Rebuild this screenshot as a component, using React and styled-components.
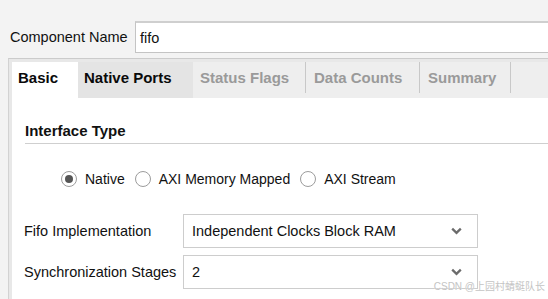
import styled, { createGlobalStyle } from 'styled-components'

const Global = createGlobalStyle`
  html, body {
    margin: 0;
    padding: 0;
    background: #f3f3f3;
    overflow: hidden;
  }
  body {
    font-family: "Liberation Sans", Arial, sans-serif;
    color: #111;
    width: 548px;
    height: 299px;
  }
`

const Page = styled.div`
  position: relative;
  width: 548px;
  height: 299px;
  padding-top: 21px;
  box-sizing: border-box;
  overflow: hidden;
`

const NameRow = styled.div`
  display: flex;
  align-items: center;
  height: 32px;
`

const NameLabel = styled.div`
  width: 135px;
  box-sizing: border-box;
  padding-left: 10px;
  font-size: 14.5px;
  flex: none;
`

const NameInput = styled.div`
  flex: none;
  width: 440px;
  height: 32px;
  box-sizing: border-box;
  background: #fff;
  border: 1px solid #c4c4c4;
  border-top: 2px solid #cfcfcf;
  padding-left: 4px;
  display: flex;
  align-items: center;
  font-size: 14.5px;
`

const Panel = styled.div`
  margin: 5px 0 0 8px;
  width: 560px;
  height: 260px;
  box-sizing: border-box;
  border-top: 1px solid #cbcbcb;
  border-left: 1px solid #d2d2d2;
  background: #e8e8e8;
  padding: 3px 0 0 3px;
  display: flex;
  flex-direction: column;
`

const TabStrip = styled.div`
  display: flex;
  height: 36px;
  background: #eeeeee;
  flex: none;
`

const Tab = styled.div`
  width: ${p => p.$w}px;
  box-sizing: border-box;
  display: flex;
  align-items: center;
  padding-bottom: 5px;
  font-size: 15px;
  font-weight: bold;
  color: ${p => (p.$disabled ? '#9a9a9a' : '#0a0a0a')};
  background: ${p => (p.$active ? '#ffffff' : p.$hover ? '#e4e4e4' : 'transparent')};
  position: relative;
  padding-left: ${p => p.$pl || 6}px;

  &::after {
    content: '';
    display: ${p => (p.$sep ? 'block' : 'none')};
    position: absolute;
    right: 0;
    top: 0;
    height: 31px;
    width: 1px;
    background: #c8c8c8;
  }
`

const Content = styled.div`
  flex: 1;
  background: #fff;
  padding: 24px 0 0 13px;
`

const SectionTitle = styled.div`
  font-size: 15px;
  line-height: 17px;
  font-weight: bold;
  padding-bottom: 4px;
  border-bottom: 1px solid #cfcfcf;
`

const RadioRow = styled.div`
  display: flex;
  align-items: center;
  height: 24px;
  margin: 23px 0 0 36px;
  gap: 10px;
`

const RadioItem = styled.label`
  display: flex;
  align-items: center;
  font-size: 14px;
  gap: 8px;
`

const Circle = styled.span`
  width: 16px;
  height: 16px;
  box-sizing: border-box;
  border-radius: 50%;
  border: 1.5px solid #9c9c9c;
  background: #fff;
  display: flex;
  align-items: center;
  justify-content: center;

  &::before {
    content: '';
    display: ${p => (p.$on ? 'block' : 'none')};
    width: 8px;
    height: 8px;
    border-radius: 50%;
    background: #555;
  }
`

const FieldRow = styled.div`
  display: flex;
  align-items: center;
  margin-top: ${p => p.$mt}px;
  height: 34px;
`

const FieldLabel = styled.div`
  width: 159px;
  flex: none;
  font-size: 14.5px;
  margin-left: -1px;
`

const Select = styled.div`
  width: 295px;
  height: 34px;
  box-sizing: border-box;
  border: 1.5px solid #cdcdcd;
  background: #fff;
  display: flex;
  align-items: center;
  justify-content: space-between;
  padding: 0 15px 0 8px;
  font-size: 14.5px;
`

const Watermark = styled.div`
  position: absolute;
  right: 3px;
  bottom: 6px;
  font-size: 10px;
  color: #c4c4c4;
  font-family: "Liberation Sans", "Noto Sans CJK SC", sans-serif;
  text-shadow: 0 0 1px #fff;
`

const Chevron = () => (
  <svg width="11" height="8" viewBox="0 0 11 8">
    <path d="M1.2 1.6 L5.5 5.8 L9.8 1.6" fill="none" stroke="#6b6b6b" strokeWidth="2.3" />
  </svg>
)

const tabs = [
  { name: 'Basic', w: 66, active: true },
  { name: 'Native Ports', w: 115, hover: true },
  { name: 'Status Flags', w: 113, disabled: true, sep: true, pl: 7 },
  { name: 'Data Counts', w: 114, disabled: true, sep: true, pl: 8 },
  { name: 'Summary', w: 91, disabled: true, sep: true, pl: 8 },
]

export default function App() {
  return (
    <>
      <Global />
      <Page>
        <NameRow>
          <NameLabel>Component Name</NameLabel>
          <NameInput>fifo</NameInput>
        </NameRow>
        <Panel>
          <TabStrip>
            {tabs.map(t => (
              <Tab
                key={t.name}
                $w={t.w}
                $active={t.active}
                $hover={t.hover}
                $disabled={t.disabled}
                $sep={t.sep}
                $pl={t.pl}
              >
                {t.name}
              </Tab>
            ))}
          </TabStrip>
          <Content>
            <SectionTitle>Interface Type</SectionTitle>
            <RadioRow>
              <RadioItem><Circle $on />Native</RadioItem>
              <RadioItem><Circle />AXI Memory Mapped</RadioItem>
              <RadioItem><Circle />AXI Stream</RadioItem>
            </RadioRow>
            <FieldRow $mt={23}>
              <FieldLabel>Fifo Implementation</FieldLabel>
              <Select>Independent Clocks Block RAM<Chevron /></Select>
            </FieldRow>
            <FieldRow $mt={7}>
              <FieldLabel>Synchronization Stages</FieldLabel>
              <Select>2<Chevron /></Select>
            </FieldRow>
          </Content>
        </Panel>
        <Watermark>CSDN @上园村蜻蜓队长</Watermark>
      </Page>
    </>
  )
}
